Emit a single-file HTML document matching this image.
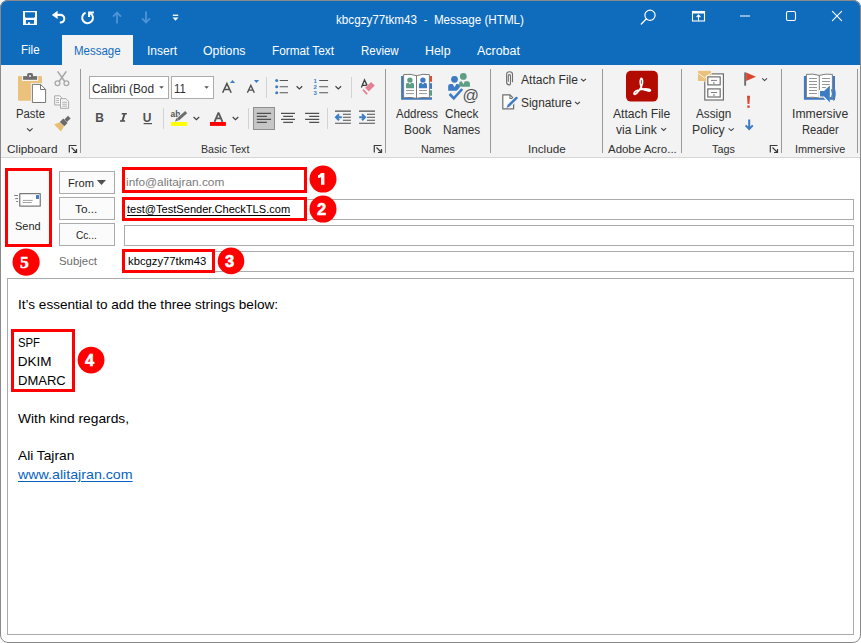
<!DOCTYPE html>
<html><head><meta charset="utf-8"><style>
html,body{margin:0;padding:0;width:861px;height:643px;overflow:hidden;background:#ffffff;}
#win{position:absolute;left:0;top:0;width:859px;height:641px;border:1px solid #8a8a8a;border-radius:8px;overflow:hidden;background:#ffffff;}
.a{position:absolute;}
.t{position:absolute;white-space:pre;transform-origin:0 0;font-family:"Liberation Sans",sans-serif;}
svg{position:absolute;overflow:visible;}
.circ{width:27px;height:27px;border-radius:50%;background:#FF0000;color:#fff;font-family:"Liberation Sans",sans-serif;font-weight:bold;font-size:18px;line-height:27px;text-align:center;}
</style></head><body>

<!-- title bar -->
<div class="a" style="left:0;top:0;width:861px;height:65px;background:#0F6CBD;border-radius:8px 8px 0 0;"></div>
<div class="a" style="left:62px;top:35px;width:71px;height:30px;background:#F3F3F3;"></div>
<!-- ribbon -->
<div class="a" style="left:0;top:65px;width:861px;height:92px;background:#F3F3F3;"></div>
<div class="a" style="left:0;top:157px;width:861px;height:1px;background:#D6D6D6;"></div>
<!-- group separators -->
<div class="a" style="left:80px;top:69px;width:1px;height:84px;background:#999999;"></div>
<div class="a" style="left:385px;top:69px;width:1px;height:84px;background:#999999;"></div>
<div class="a" style="left:490px;top:69px;width:1px;height:84px;background:#999999;"></div>
<div class="a" style="left:602px;top:69px;width:1px;height:84px;background:#999999;"></div>
<div class="a" style="left:681px;top:69px;width:1px;height:84px;background:#999999;"></div>
<div class="a" style="left:781px;top:69px;width:1px;height:84px;background:#999999;"></div>
<div class="a" style="left:857px;top:69px;width:1px;height:84px;background:#999999;"></div>
<!-- font boxes -->
<div class="a" style="left:89px;top:76px;width:78px;height:21px;border:1px solid #ABABAB;background:#fff;"></div>
<div class="a" style="left:171px;top:76px;width:41px;height:21px;border:1px solid #ABABAB;background:#fff;"></div>
<!-- small separators -->
<div class="a" style="left:266px;top:77px;width:1px;height:21px;background:#D2D2D2;"></div>
<div class="a" style="left:351px;top:77px;width:1px;height:21px;background:#D2D2D2;"></div>
<div class="a" style="left:163px;top:108px;width:1px;height:21px;background:#D2D2D2;"></div>
<div class="a" style="left:248px;top:108px;width:1px;height:21px;background:#D2D2D2;"></div>
<div class="a" style="left:327px;top:108px;width:1px;height:21px;background:#D2D2D2;"></div>
<!-- align left selected -->
<div class="a" style="left:253px;top:107px;width:20px;height:21px;background:#C6C6C6;border:1px solid #8F8F8F;"></div>

<!-- form -->
<div class="a" style="left:8px;top:171px;width:41px;height:73px;background:#FBFBFB;"></div>
<div class="a" style="left:59px;top:171px;width:54px;height:21px;border:1px solid #ABABAB;background:#FBFBFB;"></div>
<div class="a" style="left:59px;top:197px;width:54px;height:21px;border:1px solid #ABABAB;background:#FBFBFB;"></div>
<div class="a" style="left:59px;top:223px;width:54px;height:21px;border:1px solid #ABABAB;background:#FBFBFB;"></div>
<div class="a" style="left:124px;top:199px;width:728px;height:19px;border:1px solid #ABABAB;"></div>
<div class="a" style="left:124px;top:225px;width:728px;height:19px;border:1px solid #ABABAB;"></div>
<div class="a" style="left:124px;top:251px;width:728px;height:19px;border:1px solid #ABABAB;"></div>
<div class="a" style="left:7px;top:278px;width:845px;height:355px;border:1px solid #ABABAB;"></div>

<!-- red boxes -->
<div class="a" style="left:5px;top:168px;width:41px;height:73px;border:3px solid #FF0000;"></div>
<div class="a" style="left:122px;top:167px;width:179px;height:20px;border:3px solid #FF0000;background:#fff;"></div>
<div class="a" style="left:122px;top:197px;width:179px;height:18px;border:3px solid #FF0000;background:#fff;"></div>
<div class="a" style="left:122px;top:249px;width:87px;height:18px;border:3px solid #FF0000;background:#fff;"></div>
<div class="a" style="left:11px;top:329px;width:58px;height:57px;border:3px solid #FF0000;"></div>

<svg style="left:0;top:0" width="861" height="643" viewBox="0 0 861 643">
<!-- save -->
<path fill="#fff" d="M23 11H37V25H23Z"/>
<path fill="#0F6CBD" d="M25 12.2H35V16.8L34.2 17.8H25.8L25 16.8Z"/>
<path fill="#0F6CBD" d="M25.9 20.1H34V23.8H29.9V22.2H28V23.8H25.9Z"/>
<!-- undo -->
<path fill="#fff" d="M51.8 14.9L57.6 10.8V19Z"/>
<path fill="none" stroke="#fff" stroke-width="2.1" d="M56 14.9H60.5A3.8 3.8 0 0 1 60.5 22.5H59.8"/>
<!-- redo -->
<path fill="none" stroke="#fff" stroke-width="2" d="M85.6 12.8A5.4 5.4 0 1 0 90.2 13.1"/>
<path fill="none" stroke="#fff" stroke-width="2" d="M89.1 17V12.4H93.9"/>
<!-- up arrow faded -->
<path fill="none" stroke="#4D94D6" stroke-width="1.8" d="M117 23.5V12.8M113 16.6L117 12.6L121 16.6"/>
<!-- down arrow faded -->
<path fill="none" stroke="#4D94D6" stroke-width="1.8" d="M146 11.5V22.2M142 18.4L146 22.4L150 18.4"/>
<!-- customize -->
<rect x="172.8" y="14.6" width="5.4" height="1.3" fill="#fff"/>
<path fill="#fff" d="M172.5 17.5H178.5L175.5 20.8Z"/>
<!-- search -->
<circle cx="650" cy="15.2" r="5.1" fill="none" stroke="#fff" stroke-width="1.2"/>
<path d="M646.4 18.8L641.3 24" stroke="#fff" stroke-width="1.3" stroke-linecap="round"/>
<!-- ribbon display options -->
<rect x="692.5" y="11.5" width="12" height="9.5" fill="none" stroke="#fff" stroke-width="1.1"/>
<rect x="692.5" y="11.5" width="12" height="2" fill="#fff"/>
<path d="M698.5 20.8V15.2M696.6 17L698.5 15.1L700.4 17" fill="none" stroke="#fff" stroke-width="1.1"/>
<!-- minimize -->
<rect x="740" y="15.5" width="10" height="1" fill="#fff"/>
<!-- maximize -->
<rect x="786.5" y="11.5" width="9" height="9" rx="1.5" fill="none" stroke="#fff" stroke-width="1.1"/>
<!-- close -->
<path d="M832.4 11.4L841.6 20.6M841.6 11.4L832.4 20.6" stroke="#fff" stroke-width="1.1" stroke-linecap="round"/>
<!-- paste -->
<rect x="18" y="76" width="24" height="24.8" rx="1.2" fill="#EAC27B"/>
<rect x="22" y="75" width="16.2" height="6" fill="#F3F3F3"/>
<rect x="23.1" y="76.1" width="14" height="3.7" fill="#6E6E6E"/>
<rect x="27.1" y="73.1" width="5.9" height="4" rx="1.5" fill="#6E6E6E"/>
<circle cx="30" cy="76" r="1" fill="#F3F3F3"/>
<path d="M30.9 82.9H41L47.1 88.9V104H30.9Z" fill="#F3F3F3"/>
<path d="M32.4 84.4H40.5L45.6 89.5V102.5H32.4Z" fill="#fff" stroke="#777" stroke-width="1"/>
<path d="M40.5 84.4V89.5H45.6" fill="none" stroke="#777" stroke-width="1"/>
<!-- paste chevron -->
<path d="M27 128.3L29.8 131L32.6 128.3" fill="none" stroke="#444" stroke-width="1.1"/>
<!-- scissors -->
<path d="M57.6 71.4L64.6 81.3M66.3 71.4L59.3 81.3" stroke="#A8A8A8" stroke-width="1.6" fill="none"/>
<circle cx="57.5" cy="83.2" r="2.4" fill="#F3F3F3" stroke="#A8A8A8" stroke-width="1.3"/>
<circle cx="66.4" cy="83.2" r="2.4" fill="#F3F3F3" stroke="#A8A8A8" stroke-width="1.3"/>
<!-- copy -->
<path d="M54.7 95.8H59.8L61.5 97.5V105H54.7Z" fill="#F7F7F7" stroke="#A8A8A8" stroke-width="1"/>
<path d="M56.2 98.5H59M56.2 100.5H59M56.2 102.5H59" stroke="#A8A8A8" stroke-width="0.9"/>
<path d="M60.5 98.7H66L68.6 101.3V108.3H60.5Z" fill="#F7F7F7" stroke="#A8A8A8" stroke-width="1"/>
<path d="M62.3 102.2H67M62.3 104.2H67M62.3 106.2H67" stroke="#A8A8A8" stroke-width="0.9"/>
<!-- format painter -->
<path d="M54.2 124.4L59.8 122.2L64 126.6L60.9 131.6Z" fill="#E8BE72"/>
<path d="M59.9 121.9L63.2 118.6L67.6 123L64.3 126.3Z" fill="#6B6B6B"/>
<path d="M64.4 119.4L68 115.8L70.6 118.4L67 122Z" fill="#6B6B6B"/>
<!-- dialog launchers -->
<g fill="none" stroke="#3A3A3A" stroke-width="1.2">
<path d="M69.3 152.5V145.5H76.5M71.5 147.5L76.5 152.5M76.5 149V152.5H73"/>
<path d="M374.3 152.5V145.5H381.5M376.5 147.5L381.5 152.5M381.5 149V152.5H378"/>
<path d="M770.3 152.5V145.5H777.5M772.5 147.5L777.5 152.5M777.5 149V152.5H774"/>
</g>
<!-- font dropdown arrows -->
<path d="M159.2 86.2H163.8L161.5 88.8Z" fill="#555"/>
<path d="M204.3 86.2H208.9L206.6 88.8Z" fill="#555"/>
<!-- grow font -->
<path d="M222.6 92.7L226.9 83.6L231.2 92.7M224.2 89.4H229.6" fill="none" stroke="#505050" stroke-width="1.5"/>
<path d="M230 82.9L232.55 80.1L235.1 82.9Z" fill="#3C7DC4"/>
<!-- shrink font -->
<path d="M247.4 92.7L250.85 85.3L254.3 92.7M248.7 90.1H253" fill="none" stroke="#505050" stroke-width="1.4"/>
<path d="M253.9 80.1H259.1L256.5 82.9Z" fill="#3C7DC4"/>
<!-- bullets -->
<g fill="#3C7DC4"><circle cx="276.7" cy="80.5" r="1.5"/><circle cx="276.7" cy="86.8" r="1.5"/><circle cx="276.7" cy="92.7" r="1.5"/></g>
<path d="M279.7 80.5H288M279.7 86.8H288M279.7 92.7H288" stroke="#555" stroke-width="1.1"/>
<path d="M296.6 86.3L299.4 88.9L302.2 86.3" fill="none" stroke="#404040" stroke-width="1.2"/>
<!-- numbering -->
<g fill="#3C7DC4" font-family="Liberation Sans" font-weight="bold" font-size="6">
<text x="313.6" y="83">1</text><text x="313.6" y="89.3">2</text><text x="313.6" y="95.2">3</text></g>
<path d="M319.2 80.5H328.1M319.2 86.8H328.1M319.2 92.7H328.1" stroke="#555" stroke-width="1.1"/>
<path d="M335.5 86.3L338.3 88.9L341.1 86.3" fill="none" stroke="#404040" stroke-width="1.2"/>
<!-- clear formatting -->
<path d="M361.4 87.6L364.5 79.9L367.1 85.4M362.7 85.4H366.4" fill="none" stroke="#404040" stroke-width="1.3"/>
<path d="M365.1 87.8L371.1 82L374.8 85.5L368.8 91.5Z" fill="#E57F92"/>
<path d="M362.4 90.3L363.5 89L367.8 93.4L366.4 94.8Z" fill="#E57F92"/>
<!-- B I U -->
<g fill="#505050" font-family="Liberation Sans" font-weight="bold" font-size="12">
<text x="95.3" y="121.9">B</text>
<text x="142.8" y="121.9">U</text>
</g>
<path d="M121.9 113.1H126.9V114.6H125.4L123.6 120.3H125.1V121.8H120V120.3H121.6L123.4 114.6H121.5Z" fill="#505050"/>
<rect x="143.6" y="123" width="8.4" height="1.2" fill="#505050"/>
<!-- highlight -->
<text x="170.6" y="117.4" fill="#555" font-family="Liberation Sans" font-weight="bold" font-size="8.4">ab</text>
<path d="M178 119.6L186.6 111.9" stroke="#F3F3F3" stroke-width="5"/>
<path d="M178 119.3L186.2 112.2" stroke="#6E6E6E" stroke-width="3"/>
<path d="M175.1 121.4L176.4 118.1L178.6 120.3Z" fill="#6E6E6E"/>
<rect x="171" y="122" width="16.2" height="3.9" fill="#FFFF00"/>
<path d="M193.6 117L196.4 119.6L199.2 117" fill="none" stroke="#404040" stroke-width="1.2"/>
<!-- font color -->
<path d="M214.5 121.8L218.5 112.6L222.5 121.8M216 118.4H221" fill="none" stroke="#5A5A5A" stroke-width="1.8" stroke-linejoin="bevel"/>
<rect x="210" y="122" width="15.9" height="3.9" fill="#FF0000"/>
<path d="M232.7 117L235.5 119.6L238.3 117" fill="none" stroke="#404040" stroke-width="1.2"/>
<!-- align left (selected) -->
<g stroke="#505050" stroke-width="1.1">
<path d="M256.8 113.4H271.1M256.8 116.4H266.9M256.8 119.4H271.1M256.8 122.4H266.9"/>
<path d="M281 113.4H295M283.2 116.4H293M281 119.4H295M283.2 122.4H293"/>
<path d="M305.1 113.4H319.2M309.2 116.4H319.2M305.1 119.4H319.2M309.2 122.4H319.2"/>
<path d="M335 111.1H350.9M342.9 114.3H350.9M342.9 117.3H350.9M342.9 120.3H350.9M335 123.3H350.9"/>
<path d="M359 111.1H375M367 114.3H375M367 117.3H375M367 120.3H375M359 123.3H375"/>
</g>
<path d="M341.8 117.3H336.5M339 114.3L336 117.3L339 120.3" fill="none" stroke="#3C7DC4" stroke-width="2"/>
<path d="M359.2 117.3H364.5M362 114.3L365 117.3L362 120.3" fill="none" stroke="#3C7DC4" stroke-width="2"/>
<!-- address book -->
<path d="M401.1 76.1H403.6V97.3H432V99.8H401.1Z" fill="#3D7BC4"/>
<rect x="429.6" y="76" width="2.4" height="5.8" fill="#D94E2B"/>
<rect x="429.6" y="83.2" width="2.4" height="5.7" fill="#3D7BC4"/>
<rect x="429.6" y="90.2" width="2.4" height="5.5" fill="#5C9E84"/>
<path d="M403.6 74.6Q410 73.6 416.5 75.6Q423 73.6 429.4 74.6V97.8Q423 96.8 416.5 98.3Q410 96.8 403.6 97.8Z" fill="#fff" stroke="#7A7A7A" stroke-width="1"/>
<path d="M416.5 75.6V98.2" stroke="#7A7A7A" stroke-width="1"/>
<circle cx="409.9" cy="80.1" r="2.7" fill="#5D9E85"/>
<path d="M405.9 88.2V84.8Q405.9 82.8 408 82.8H411.8Q414 82.8 414 84.8V88.2Z" fill="#5D9E85"/>
<path d="M408.6 82.7L409.9 84.6L411.2 82.7Z" fill="#fff"/>
<circle cx="422.9" cy="80.1" r="2.7" fill="#3D7BC4"/>
<path d="M418.9 88.2V84.8Q418.9 82.8 421 82.8H424.8Q427 82.8 427 84.8V88.2Z" fill="#3D7BC4"/>
<path d="M421.6 82.7L422.9 84.6L424.2 82.7Z" fill="#fff"/>
<path d="M406 90.5H414M406 93.6H414M419 90.5H427M419 93.6H427" stroke="#8A8A8A" stroke-width="0.9"/>
<!-- check names -->
<circle cx="463.3" cy="76.4" r="3.4" fill="#5D9E85"/>
<path d="M459.1 86.8V83.4Q459.1 81.2 461.3 81.2H467.7Q469.9 81.2 469.9 83.4V86.8Z" fill="#5D9E85"/>
<circle cx="454.5" cy="79.3" r="3.4" fill="#3D7BC4"/>
<path d="M448.2 90.7V86.2Q448.2 84 450.4 84H457.5Q459.7 84 459.7 86.2V90.7Z" fill="#3D7BC4"/>
<path d="M452.6 83.9L454.5 87.2L456.4 83.9Z" fill="#F3F3F3"/>
<path d="M461.6 81.1L463.3 84.2L465 81.1Z" fill="#F3F3F3"/>
<path d="M449.6 92.6L453.8 97.2L462.4 88" fill="none" stroke="#F3F3F3" stroke-width="4.6"/>
<path d="M449.6 94L453.8 98.3L462.2 89" fill="none" stroke="#3D7BC4" stroke-width="2.6"/>
<text x="462.6" y="100.6" fill="#505050" font-family="Liberation Sans" font-size="16.2">@</text>
<!-- paperclip -->
<path d="M508.3 81.7V75.8Q508.3 74.6 509.4 74.6Q510.5 74.6 510.5 75.8V82.2Q510.5 84.9 509.55 84.9Q506.6 84.9 506.6 82.2V74.2Q506.6 71.7 509.55 71.7Q512.5 71.7 512.5 74.2V82.2" fill="none" stroke="#6E6E6E" stroke-width="1.1"/>
<!-- signature -->
<path d="M502.8 94.9H510L513.6 98.5V108.8H502.8Z" fill="#fff" stroke="#6E6E6E" stroke-width="1.2"/>
<path d="M510 94.9V98.5H513.6" fill="none" stroke="#6E6E6E" stroke-width="1.1"/>
<path d="M507.5 106.8L516.8 97.8" stroke="#F3F3F3" stroke-width="5"/>
<path d="M506.3 108.2L508 104.6L516 96.8Q517.6 96.6 517.9 98.2L509.8 106.3Z" fill="#3D7BC4"/>
<path d="M581 78.8L583.5 81L586 78.8M575 101.8L577.5 104L580 101.8" fill="none" stroke="#404040" stroke-width="1.1"/>
<!-- acrobat -->
<rect x="626" y="70.8" width="31.9" height="30.8" rx="5" fill="#B30B00"/>
<path d="M641.6 88.3C640.2 85 639.8 80.5 641.2 78.3C642.5 78.3 642.8 81 642.4 83.5C641.6 88 637.5 93.5 634.8 94.4C633.2 94.2 633.6 92 637 90.6C640.5 89.2 646 88.6 649.5 89.4C651 89.8 650.8 91.2 649 91.1C646.5 90.8 643.5 90.2 641.6 88.3Z" fill="none" stroke="#fff" stroke-width="1.6" stroke-linejoin="round"/>
<path d="M661.3 128.2L663.7 130.4L666.1 128.2" fill="none" stroke="#404040" stroke-width="1.1"/>
<!-- assign policy -->
<rect x="704.8" y="73.9" width="18.6" height="26.1" fill="#fff" stroke="#6E6E6E" stroke-width="1.2"/>
<rect x="697.4" y="70.3" width="14.2" height="11.2" fill="#F8F8F8"/>
<rect x="697.9" y="70.8" width="13.2" height="10.2" fill="#EAC27B"/>
<path d="M698.2 73.2L704.5 78L710.8 73.2" fill="none" stroke="#fff" stroke-width="0.8"/>
<rect x="707.8" y="76.9" width="12.4" height="8" fill="#fff" stroke="#fff" stroke-width="3"/>
<rect x="707.8" y="76.9" width="12.4" height="8" fill="#fff" stroke="#6E6E6E" stroke-width="1.2"/>
<rect x="707.8" y="88.9" width="12.4" height="8.1" fill="#fff" stroke="#6E6E6E" stroke-width="1.2"/>
<path d="M711 80.4H717M711 92.5H717" stroke="#6E6E6E" stroke-width="0.9"/>
<rect x="713.2" y="82.3" width="1.4" height="1.4" fill="#6E6E6E"/>
<rect x="713.2" y="94.3" width="1.4" height="1.4" fill="#6E6E6E"/>
<path d="M728.6 128.3L731.2 130.6L733.8 128.3" fill="none" stroke="#404040" stroke-width="1.1"/>
<!-- flag -->
<rect x="744.2" y="72.4" width="1.9" height="13.3" fill="#6E6E6E"/>
<path d="M746.1 72.4L756 76.7L746.1 81Z" fill="#D9452D"/>
<path d="M762.2 78.4L764.6 80.6L767 78.4" fill="none" stroke="#404040" stroke-width="1.1"/>
<!-- importance high -->
<path d="M747 95.7H750L749.4 104H747.6Z" fill="#D9452D"/>
<rect x="747.3" y="105.5" width="2.4" height="2.3" fill="#D9452D"/>
<!-- importance low -->
<path d="M749.2 119.6V129M745.6 125.4L749.2 129L752.8 125.4" fill="none" stroke="#3D7BC4" stroke-width="2"/>
<!-- immersive reader -->
<path d="M803.9 75.9H806.4V97.4H832.5V75.9H835V99.7H803.9Z" fill="#3D7BC4"/>
<path d="M806.4 74.4Q813 73.4 819.3 75.4Q825.7 73.4 832.4 74.4V97.6Q825.7 96.6 819.3 98Q813 96.6 806.4 97.6Z" fill="#fff" stroke="#7A7A7A" stroke-width="1"/>
<path d="M819.3 75.4V97.8" stroke="#7A7A7A" stroke-width="1"/>
<path d="M809 78.5H817M809 81.5H817M809 84.5H817M809 87.5H817M809 90.5H817M809 93.5H817M822 78.5H830M822 81.5H830M822 84.5H830M822 87.5H830" stroke="#8A8A8A" stroke-width="0.9"/>
<path d="M819 90H823.3L829.6 84.2V103.8L823.3 97.6H819Z" fill="#fff"/>
<path d="M820 91H824.1L829.8 85.4V102.5L824.1 96.6H820Z" fill="#3D7BC4"/>
<path d="M831.4 89.3Q833.4 93.8 831.4 98.4M833.6 86.8Q837 93.8 833.6 100.8" fill="none" stroke="#3D7BC4" stroke-width="1"/>
<!-- send envelope -->
<rect x="19.8" y="193.7" width="20.4" height="12.4" fill="#fff" stroke="#5A5A5A" stroke-width="1"/>
<rect x="36" y="195.1" width="3" height="3.8" fill="#3D7BC4"/>
<path d="M22.8 200.4H32.7M22.8 202.5H31.7" stroke="#8A8A8A" stroke-width="0.8"/>
<path d="M14.2 195.5H18M15.2 198.6H18M16.2 201.5H18" stroke="#6E6E6E" stroke-width="0.9"/>
<!-- from triangle -->
<path d="M96.9 180.1H106L101.45 185.1Z" fill="#505050"/>
<!-- circles -->
<g fill="#FF0000">
<circle cx="323" cy="179.1" r="13.5"/>
<circle cx="323" cy="209.1" r="13.5"/>
<circle cx="231" cy="260.9" r="13.3"/>
<circle cx="91.05" cy="360.05" r="13.4"/>
<circle cx="26.1" cy="262.1" r="13.6"/>
</g>
<g fill="#fff" stroke="#fff" stroke-width="0.6" font-family="Liberation Sans" font-weight="bold" font-size="16.5" text-anchor="middle">
<text x="321.6" y="215.1">2</text>
<text x="229.7" y="266.8">3</text>
<text x="89.6" y="366">4</text>
</g>
<text x="24.4" y="268.1" fill="#fff" stroke="#fff" stroke-width="0.5" font-family="Liberation Serif" font-weight="bold" font-size="17.5" text-anchor="middle">5</text>
<path d="M321 172.9H324.4V184.8H321V177.2Q319.8 177.8 318 178V175.3Q320 174.8 321 172.9Z" fill="#fff"/>
</svg>

<!-- window border overlay -->
<div class="a" style="left:0;top:0;width:859px;height:641px;border:1px solid #8A8A8A;border-radius:8px;"></div>

<div class="t" style="left:335.80px;top:13.84px;font-size:12px;line-height:12px;color:#ffffff;transform:scaleX(0.9720);">kbcgzy77tkm43&nbsp;&nbsp;-&nbsp;&nbsp;Message (HTML)</div>
<div class="t" style="left:20.91px;top:43.84px;font-size:12px;line-height:12px;color:#ffffff;transform:scaleX(0.9590);">File</div>
<div class="t" style="left:74.31px;top:45.34px;font-size:12px;line-height:12px;color:#0F6CBD;transform:scaleX(0.9578);">Message</div>
<div class="t" style="left:146.68px;top:45.34px;font-size:12px;line-height:12px;color:#ffffff;transform:scaleX(1.0029);">Insert</div>
<div class="t" style="left:203.36px;top:45.34px;font-size:12px;line-height:12px;color:#ffffff;transform:scaleX(1.0259);">Options</div>
<div class="t" style="left:272.39px;top:45.34px;font-size:12px;line-height:12px;color:#ffffff;transform:scaleX(0.9816);">Format Text</div>
<div class="t" style="left:361.11px;top:45.34px;font-size:12px;line-height:12px;color:#ffffff;transform:scaleX(0.9565);">Review</div>
<div class="t" style="left:425.46px;top:45.34px;font-size:12px;line-height:12px;color:#ffffff;transform:scaleX(1.0346);">Help</div>
<div class="t" style="left:477.05px;top:45.34px;font-size:12px;line-height:12px;color:#ffffff;transform:scaleX(1.0359);">Acrobat</div>
<div class="t" style="left:15.62px;top:107.94px;font-size:12px;line-height:12px;color:#303030;transform:scaleX(0.9428);">Paste</div>
<div class="t" style="left:7.19px;top:144.49px;font-size:11px;line-height:11px;color:#303030;transform:scaleX(1.0719);">Clipboard</div>
<div class="t" style="left:91.89px;top:82.64px;font-size:12px;line-height:12px;color:#303030;transform:scaleX(0.9902);">Calibri (Bod</div>
<div class="t" style="left:174.02px;top:82.64px;font-size:12px;line-height:12px;color:#303030;transform:scaleX(0.9407);">11</div>
<div class="t" style="left:200.86px;top:144.49px;font-size:11px;line-height:11px;color:#303030;transform:scaleX(0.9685);">Basic Text</div>
<div class="t" style="left:395.81px;top:107.84px;font-size:12px;line-height:12px;color:#303030;transform:scaleX(0.9549);">Address</div>
<div class="t" style="left:404.19px;top:124.04px;font-size:12px;line-height:12px;color:#303030;transform:scaleX(0.9901);">Book</div>
<div class="t" style="left:444.79px;top:107.84px;font-size:12px;line-height:12px;color:#303030;transform:scaleX(0.9812);">Check</div>
<div class="t" style="left:443.10px;top:124.04px;font-size:12px;line-height:12px;color:#303030;transform:scaleX(0.9778);">Names</div>
<div class="t" style="left:420.96px;top:144.49px;font-size:11px;line-height:11px;color:#303030;transform:scaleX(0.9720);">Names</div>
<div class="t" style="left:520.58px;top:74.34px;font-size:12px;line-height:12px;color:#303030;transform:scaleX(1.0053);">Attach File</div>
<div class="t" style="left:520.59px;top:96.74px;font-size:12px;line-height:12px;color:#303030;transform:scaleX(0.9885);">Signature</div>
<div class="t" style="left:528.00px;top:144.49px;font-size:11px;line-height:11px;color:#303030;transform:scaleX(1.0644);">Include</div>
<div class="t" style="left:613.47px;top:107.84px;font-size:12px;line-height:12px;color:#303030;transform:scaleX(1.0108);">Attach File</div>
<div class="t" style="left:616.38px;top:123.84px;font-size:12px;line-height:12px;color:#303030;transform:scaleX(1.0028);">via Link</div>
<div class="t" style="left:607.61px;top:144.49px;font-size:11px;line-height:11px;color:#303030;transform:scaleX(1.0409);">Adobe Acro...</div>
<div class="t" style="left:695.50px;top:107.84px;font-size:12px;line-height:12px;color:#303030;transform:scaleX(0.9761);">Assign</div>
<div class="t" style="left:691.76px;top:123.84px;font-size:12px;line-height:12px;color:#303030;transform:scaleX(1.0222);">Policy</div>
<div class="t" style="left:711.85px;top:144.49px;font-size:11px;line-height:11px;color:#303030;transform:scaleX(0.9842);">Tags</div>
<div class="t" style="left:791.67px;top:107.84px;font-size:12px;line-height:12px;color:#303030;transform:scaleX(1.0158);">Immersive</div>
<div class="t" style="left:801.63px;top:123.84px;font-size:12px;line-height:12px;color:#303030;transform:scaleX(0.9303);">Reader</div>
<div class="t" style="left:794.75px;top:144.49px;font-size:11px;line-height:11px;color:#303030;transform:scaleX(0.9892);">Immersive</div>
<div class="t" style="left:14.94px;top:220.69px;font-size:11px;line-height:11px;color:#262626;transform:scaleX(0.9958);">Send</div>
<div class="t" style="left:67.93px;top:177.59px;font-size:11px;line-height:11px;color:#262626;transform:scaleX(1.0093);">From</div>
<div class="t" style="left:75.49px;top:204.09px;font-size:11px;line-height:11px;color:#262626;transform:scaleX(1.0763);">To...</div>
<div class="t" style="left:76.09px;top:230.19px;font-size:11px;line-height:11px;color:#262626;transform:scaleX(0.9199);">Cc...</div>
<div class="t" style="left:59.02px;top:256.49px;font-size:11px;line-height:11px;color:#6B6B6B;transform:scaleX(1.0364);">Subject</div>
<div class="t" style="left:125.89px;top:176.79px;font-size:11px;line-height:11px;color:#7A7A7A;transform:scaleX(1.0769);">info@alitajran.com</div>
<div class="t" style="left:127.34px;top:203.89px;font-size:11px;line-height:11px;color:#000000;transform:scaleX(1.0057);text-decoration:underline;text-underline-offset:2px;">test@TestSender.CheckTLS.com</div>
<div class="t" style="left:127.72px;top:256.29px;font-size:11px;line-height:11px;color:#000000;transform:scaleX(1.0234);">kbcgzy77tkm43</div>
<div class="t" style="left:17.69px;top:297.57px;font-size:13.5px;line-height:13.5px;color:#000000;transform:scaleX(1.0054);">It’s essential to add the three strings below:</div>
<div class="t" style="left:18.12px;top:335.57px;font-size:13.5px;line-height:13.5px;color:#000000;transform:scaleX(0.8388);">SPF</div>
<div class="t" style="left:17.79px;top:354.57px;font-size:13.5px;line-height:13.5px;color:#000000;transform:scaleX(1.0000);">DKIM</div>
<div class="t" style="left:18.02px;top:373.57px;font-size:13.5px;line-height:13.5px;color:#000000;transform:scaleX(0.9637);">DMARC</div>
<div class="t" style="left:18.17px;top:411.57px;font-size:13.5px;line-height:13.5px;color:#000000;transform:scaleX(1.0210);">With kind regards,</div>
<div class="t" style="left:18.18px;top:448.57px;font-size:13.5px;line-height:13.5px;color:#000000;transform:scaleX(1.0180);">Ali Tajran</div>
<div class="t" style="left:18.15px;top:467.57px;font-size:13.5px;line-height:13.5px;color:#0563C1;transform:scaleX(1.0535);text-decoration:underline;text-underline-offset:2px;">www.alitajran.com</div>
</body></html>
